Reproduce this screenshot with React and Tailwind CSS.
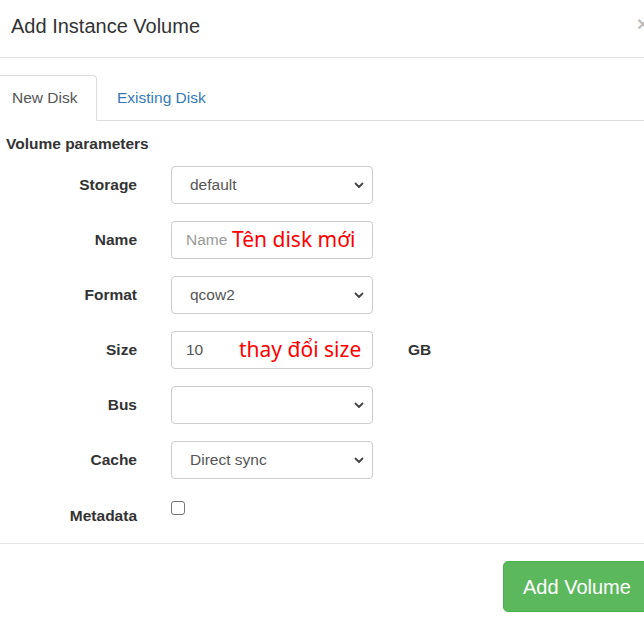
import React from 'react';

const Chevron = () => (
    <svg width="10" height="7" viewBox="0 0 10 7" className="shrink-0">
        <path d="M1.5 1.5 L5 5 L8.5 1.5" fill="none" stroke="#444" strokeWidth="1.8" strokeLinecap="round" strokeLinejoin="round" />
    </svg>
);

const Label = ({ children }) => (
    <div className="w-[137px] shrink-0 text-right font-bold text-[15.5px] text-[#333]">{children}</div>
);

const SelectBox = ({ value }) => (
    <div className="w-[202px] h-[38px] shrink-0 flex items-center justify-between pl-[18px] pr-[8px] border border-[#ccc] rounded-[4px] bg-white text-[15.5px] text-[#555]">
        <span>{value}</span>
        <Chevron />
    </div>
);

const Row = ({ label, children }) => (
    <div className="flex items-center gap-[34px]">
        <Label>{label}</Label>
        {children}
    </div>
);

const App = () => {
    return (
        <div className="w-[644px] h-[635px] overflow-hidden bg-white font-['Liberation_Sans',Arial,sans-serif] text-[#333]">
            {/* Header */}
            <div className="h-[58px] flex items-start pt-[13px] pl-[11px] border-b border-[#e5e5e5]">
                <h4 className="text-[20px] text-[#333] leading-[26px]">Add Instance Volume</h4>
                <span className="ml-auto mr-[-5px] mt-[-2px] text-[21px] font-bold text-[#000] opacity-25 leading-[26px]">×</span>
            </div>

            {/* Tabs */}
            <div className="mt-[17px] flex items-end border-b border-[#ddd]">
                <div className="w-[97px] h-[46px] -mb-px flex items-center pl-[12px] border border-[#ddd] border-b-white border-l-0 rounded-tr-[4px] bg-white text-[15.5px] text-[#555]">
                    New Disk
                </div>
                <div className="h-[45px] flex items-center pl-[20px] text-[15.5px] text-[#337ab7]">
                    Existing Disk
                </div>
            </div>

            {/* Body */}
            <div className="pl-[6px] pt-[13px]">
                <div className="font-bold text-[15.5px] text-[#333] leading-[20px]">Volume parameters</div>
            </div>
            <div className="mt-[12px] flex flex-col gap-[17px]">
                <Row label="Storage">
                    <SelectBox value="default" />
                </Row>
                <Row label="Name">
                    <div className="relative w-[202px] h-[38px] shrink-0 flex items-center pl-[14px] border border-[#ccc] rounded-[4px] bg-white">
                        <span className="text-[15.5px] text-[#999]">Name</span>
                        <span className="absolute left-[60px] top-[2px] font-['Noto_Sans','Open_Sans',sans-serif] text-[21px] text-[#ff0000] leading-[30px]">Tên disk mới</span>
                    </div>
                </Row>
                <Row label="Format">
                    <SelectBox value="qcow2" />
                </Row>
                <Row label="Size">
                    <div className="relative w-[202px] h-[38px] shrink-0 flex items-center pl-[14px] border border-[#ccc] rounded-[4px] bg-white">
                        <span className="text-[15.5px] text-[#555]">10</span>
                        <span className="absolute left-[67px] top-[2px] font-['Noto_Sans','Open_Sans',sans-serif] text-[21px] text-[#ff0000] leading-[30px]">thay đổi size</span>
                    </div>
                    <span className="ml-[1px] font-bold text-[15.5px] text-[#333]">GB</span>
                </Row>
                <Row label="Bus">
                    <SelectBox value="" />
                </Row>
                <Row label="Cache">
                    <SelectBox value="Direct sync" />
                </Row>
                <div className="flex items-start gap-[34px] h-[47px]">
                    <div className="pt-[8px]"><Label>Metadata</Label></div>
                    <div className="mt-[5px] w-[14px] h-[14px] border border-[#767676] rounded-[3px] bg-white"></div>
                </div>
            </div>

            {/* Footer */}
            <div className="border-t border-[#e5e5e5] pt-[17px] flex">
                <button className="ml-[503px] shrink-0 h-[51px] px-[19px] rounded-[5px] bg-[#5cb85c] border border-[#4cae4c] text-white text-[20px]">
                    Add Volume
                </button>
            </div>
        </div>
    );
};

export default App;
